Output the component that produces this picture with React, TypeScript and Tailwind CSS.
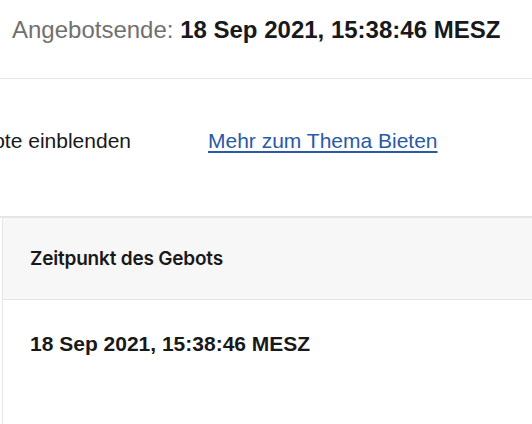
export default function App() {
  return (
    <div className="w-[532px] h-[424px] overflow-hidden bg-white font-['Liberation_Sans',Arial,sans-serif]">
      <div className="pt-[16px] pl-[12px] text-[24px] leading-[28px] whitespace-nowrap">
        <span className="text-[#707070]">Angebotsende: </span>
        <span className="font-bold text-[#191919]">18 Sep 2021, 15:38:46 MESZ</span>
      </div>
      <div className="mt-[34px] border-t border-[#e5e5e5]" />
      <div className="mt-[50px] flex items-baseline text-[21px] leading-[24px] whitespace-nowrap">
        <div className="w-[131px] flex justify-end overflow-hidden text-[#191919]">
          <span>Automatische Gebote einblenden</span>
        </div>
        <a href="#" className="ml-[77px] text-[#2a5aa6] underline decoration-[2px] underline-offset-[3px]">
          Mehr zum Thema Bieten
        </a>
      </div>
      <div className="mt-[63px] border-t-2 border-[#e5e5e5]">
        <div className="pl-[2px]">
          <div className="border-l border-[#e5e5e5]">
            <div className="h-[82px] flex items-center pl-[27px] bg-[#f7f7f7] border-b border-[#e5e5e5]">
              <span className="font-['Inter',sans-serif] font-semibold text-[19px] leading-[24px] text-[#191919] tracking-[-0.2px]">
                Zeitpunkt des Gebots
              </span>
            </div>
            <div className="pt-[32px] pl-[27px] h-[200px]">
              <span className="font-bold text-[21px] leading-[24px] text-[#191919] whitespace-nowrap">
                18 Sep 2021, 15:38:46 MESZ
              </span>
            </div>
          </div>
        </div>
      </div>
    </div>
  );
}
